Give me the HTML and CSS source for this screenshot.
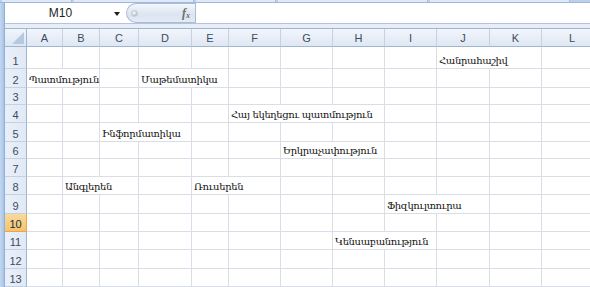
FILE: index.html
```html
<!DOCTYPE html>
<html>
<head>
<meta charset="utf-8">
<link rel="stylesheet" href="styles.css">
</head>
<body>
<div class="window">
  <div class="ribbon-edge">
    <span class="tab t1"></span><span class="tab t2"></span><span class="tab t3"></span><span class="tab t4"></span><span class="tab t5"></span>
  </div>
  <div class="body">
    <div class="side"></div>
    <div class="main">
      <div class="formula-bar">
        <div class="name-box"><span class="name">M10</span><span class="arrow"></span></div>
        <div class="pill"><span class="dot"></span><span class="fx">f<sub>x</sub></span></div>
        <div class="input"></div>
      </div>
      <div class="gap"></div>
      <div class="sheet">
        <div class="corner"><span class="tri"></span></div>
        <div class="ch">A</div><div class="ch">B</div><div class="ch">C</div><div class="ch">D</div><div class="ch">E</div><div class="ch">F</div><div class="ch">G</div><div class="ch">H</div><div class="ch">I</div><div class="ch">J</div><div class="ch">K</div><div class="ch last">L</div>

        <div class="rh">1</div>
        <div class="c"></div><div class="c"></div><div class="c"></div><div class="c"></div><div class="c"></div><div class="c"></div><div class="c"></div><div class="c"></div><div class="c"></div><div class="c s2">Հանրահաշիվ</div><div class="c"></div>

        <div class="rh">2</div>
        <div class="c s2">Պատմություն</div><div class="c"></div><div class="c s2">Մաթեմատիկա</div><div class="c"></div><div class="c"></div><div class="c"></div><div class="c"></div><div class="c"></div><div class="c"></div><div class="c"></div>

        <div class="rh">3</div>
        <div class="c"></div><div class="c"></div><div class="c"></div><div class="c"></div><div class="c"></div><div class="c"></div><div class="c"></div><div class="c"></div><div class="c"></div><div class="c"></div><div class="c"></div><div class="c"></div>

        <div class="rh">4</div>
        <div class="c"></div><div class="c"></div><div class="c"></div><div class="c"></div><div class="c"></div><div class="c s3">Հայ եկեղեցու պատմություն</div><div class="c"></div><div class="c"></div><div class="c"></div><div class="c"></div>

        <div class="rh">5</div>
        <div class="c"></div><div class="c"></div><div class="c s2">Ինֆորմատիկա</div><div class="c"></div><div class="c"></div><div class="c"></div><div class="c"></div><div class="c"></div><div class="c"></div><div class="c"></div><div class="c"></div>

        <div class="rh">6</div>
        <div class="c"></div><div class="c"></div><div class="c"></div><div class="c"></div><div class="c"></div><div class="c"></div><div class="c s2">Երկրաչափություն</div><div class="c"></div><div class="c"></div><div class="c"></div><div class="c"></div>

        <div class="rh">7</div>
        <div class="c"></div><div class="c"></div><div class="c"></div><div class="c"></div><div class="c"></div><div class="c"></div><div class="c"></div><div class="c"></div><div class="c"></div><div class="c"></div><div class="c"></div><div class="c"></div>

        <div class="rh">8</div>
        <div class="c"></div><div class="c s2">Անգլերեն</div><div class="c"></div><div class="c s2">Ռուսերեն</div><div class="c"></div><div class="c"></div><div class="c"></div><div class="c"></div><div class="c"></div><div class="c"></div>

        <div class="rh">9</div>
        <div class="c"></div><div class="c"></div><div class="c"></div><div class="c"></div><div class="c"></div><div class="c"></div><div class="c"></div><div class="c"></div><div class="c s2">Ֆիզկուլտուրա</div><div class="c"></div><div class="c"></div>

        <div class="rh sel">10</div>
        <div class="c"></div><div class="c"></div><div class="c"></div><div class="c"></div><div class="c"></div><div class="c"></div><div class="c"></div><div class="c"></div><div class="c"></div><div class="c"></div><div class="c"></div><div class="c"></div>

        <div class="rh">11</div>
        <div class="c"></div><div class="c"></div><div class="c"></div><div class="c"></div><div class="c"></div><div class="c"></div><div class="c"></div><div class="c s2">Կենսաբանություն</div><div class="c"></div><div class="c"></div><div class="c"></div>

        <div class="rh">12</div>
        <div class="c"></div><div class="c"></div><div class="c"></div><div class="c"></div><div class="c"></div><div class="c"></div><div class="c"></div><div class="c"></div><div class="c"></div><div class="c"></div><div class="c"></div><div class="c"></div>

        <div class="rh">13</div>
        <div class="c"></div><div class="c"></div><div class="c"></div><div class="c"></div><div class="c"></div><div class="c"></div><div class="c"></div><div class="c"></div><div class="c"></div><div class="c"></div><div class="c"></div><div class="c"></div>
      </div>
    </div>
  </div>
</div>
</body>
</html>
```
FILE: styles.css
```css
* { box-sizing: border-box; }
html, body { margin: 0; padding: 0; }
body {
  width: 590px;
  height: 287px;
  overflow: hidden;
  background: #ffffff;
  font-family: "Liberation Sans", Arial, sans-serif;
}
.window { width: 590px; height: 287px; display: flex; flex-direction: column; overflow: hidden; }

.ribbon-edge {
  height: 3px;
  display: flex;
  background: #bcd0ea;
  border-bottom: 1px solid #9db8dc;
  flex: none;
}
.tab { height: 2px; background: #dfe9f6; border-right: 1px solid #a8c0e0; }
.t1 { width: 70px; margin-left: 2px; }
.t2 { width: 120px; margin-left: 2px; }
.t3 { width: 80px; margin-left: 2px; }
.t4 { width: 150px; margin-left: 2px; }
.t5 { width: 140px; margin-left: 2px; }

.body { flex: 1; display: flex; min-height: 0; }
.side {
  width: 5px;
  flex: none;
  background: linear-gradient(to right, #c4d7ef, #a9c4e6);
  border-right: 1px solid #8eb0dc;
}
.main { flex: 1; display: flex; flex-direction: column; min-width: 0; }

.formula-bar {
  height: 21px;
  flex: none;
  display: flex;
  background: #ffffff;
  border-bottom: 1px solid #b1c5df;
}
.name-box {
  width: 121px;
  display: flex;
  align-items: center;
}
.name {
  flex: 1;
  text-align: center;
  font-size: 12px;
  color: #1e1e1e;
  padding-left: 2px;
}
.arrow {
  width: 0; height: 0;
  border-left: 3px solid transparent;
  border-right: 3px solid transparent;
  border-top: 4px solid #1e1e1e;
  margin-right: 6px;
  margin-top: 1px;
}
.pill {
  width: 69px;
  display: flex;
  align-items: center;
  justify-content: space-between;
  border: 1px solid #a9bcd6;
  border-right: none;
  border-radius: 11px 0 0 11px;
  background: linear-gradient(to bottom, #f4f7fb, #dbe4f0 60%, #e4ebf5);
  padding: 0 5px 0 4px;
}
.dot {
  width: 7px; height: 7px;
  border-radius: 50%;
  background: radial-gradient(circle at 40% 35%, #ffffff, #b9c0c9 70%);
  border: 1px solid #c5ccd5;
}
.fx {
  font-family: "Liberation Serif", serif;
  font-style: italic;
  font-size: 12px;
  color: #6d6d6d;
  font-weight: bold;
}
.fx sub { font-size: 8px; vertical-align: -1px; }
.input { flex: 1; border-left: 1px solid #a9bcd6; }

.gap { height: 4px; flex: none; background: #e9eef6; }

.sheet {
  display: grid;
  grid-template-columns: 22px 36px 37px 39px 53px 37px 52px 52px 52px 52px 53px 52px 60px;
  grid-template-rows: 18px 22px 19px 17px 18px 19px 17px 18px 18px 19px 18px 18px 19px 18px;
  border-top: 1px solid #9eb6ce;
}
.corner {
  background: linear-gradient(to bottom, #f1f5fb, #dde6f2);
  border-right: 1px solid #9eb6ce;
  border-bottom: 1px solid #9eb6ce;
  position: relative;
}
.tri {
  position: absolute;
  right: 2px; bottom: 2px;
  width: 0; height: 0;
  border-left: 12px solid transparent;
  border-bottom: 12px solid #b7c9e0;
}
.ch {
  background: linear-gradient(to bottom, #f2f6fc, #dfe7f3);
  border-right: 1px solid #c2d1e4;
  border-bottom: 1px solid #9eb6ce;
  font-size: 11px;
  color: #3a4c63;
  display: flex;
  align-items: center;
  justify-content: center;
}
.ch.last { border-right: none; }
.rh {
  background: linear-gradient(to right, #eaf0f9, #e1e9f5);
  border-right: 1px solid #9eb6ce;
  border-bottom: 1px solid #c2d1e4;
  font-size: 11px;
  color: #3a4c63;
  display: flex;
  align-items: flex-end;
  justify-content: center;
  padding-bottom: 1px;
}
.rh.sel {
  background: linear-gradient(to bottom, #f9da9c, #f3c46d);
  border-right: 1px solid #f2a24a;
  border-bottom: 1px solid #f2a24a;
  color: #1e2a3a;
}
.c {
  border-right: 1px solid #d8dde6;
  border-bottom: 1px solid #d8dde6;
  font-family: "DejaVu Serif", "Liberation Serif", serif;
  font-size: 10px;
  letter-spacing: -0.35px;
  color: #141414;
  white-space: nowrap;
  overflow: visible;
  display: flex;
  align-items: flex-end;
  padding: 0 0 2px 2px;
}
.s2 { grid-column: span 2; }
.s3 { grid-column: span 3; }
```
